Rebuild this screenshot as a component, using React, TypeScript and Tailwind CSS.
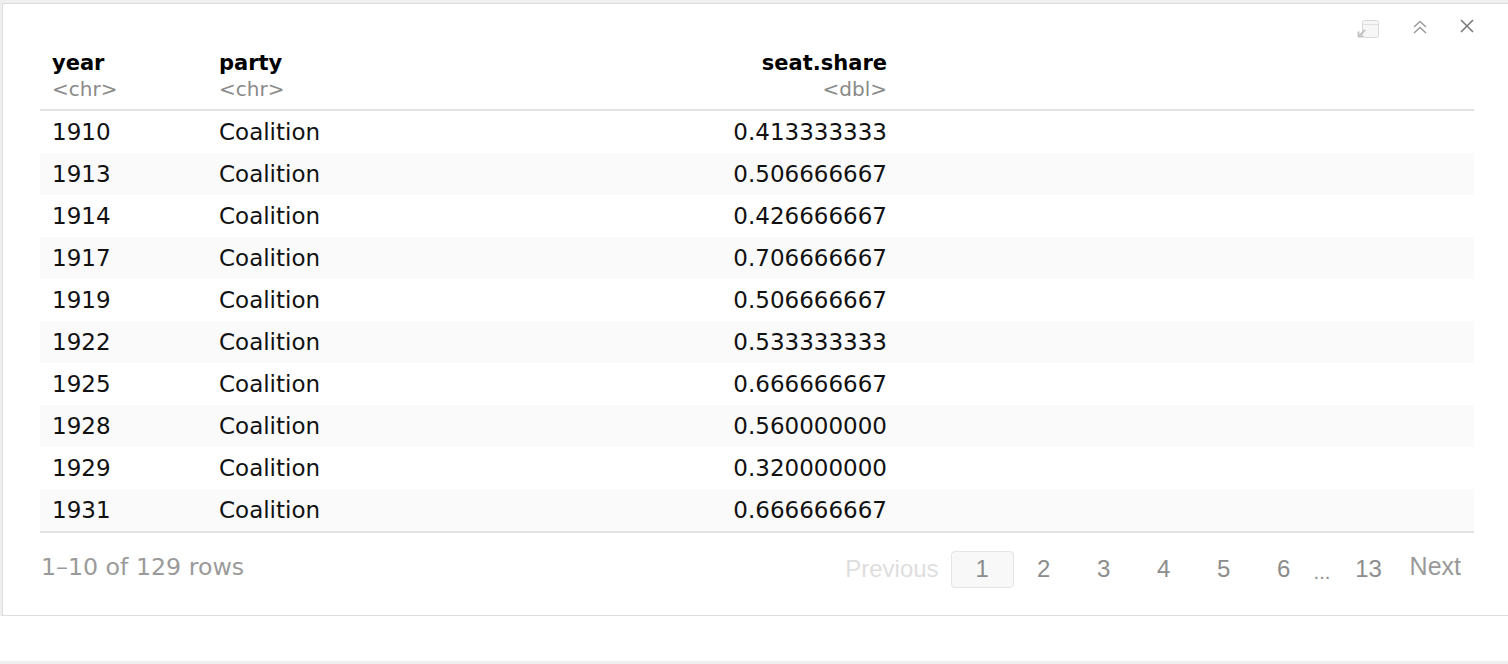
import React from "react";

const rows: [string, string, string][] = [
  ["1910", "Coalition", "0.413333333"],
  ["1913", "Coalition", "0.506666667"],
  ["1914", "Coalition", "0.426666667"],
  ["1917", "Coalition", "0.706666667"],
  ["1919", "Coalition", "0.506666667"],
  ["1922", "Coalition", "0.533333333"],
  ["1925", "Coalition", "0.666666667"],
  ["1928", "Coalition", "0.560000000"],
  ["1929", "Coalition", "0.320000000"],
  ["1931", "Coalition", "0.666666667"],
];

const pages = ["2", "3", "4", "5", "6"];

function PopoutIcon() {
  return (
    <svg width="24" height="20" viewBox="0 0 24 20" fill="none">
      <rect x="6.5" y="1.5" width="16" height="17" rx="2" fill="#f6f6f6" stroke="#d8d8d8" />
      <line x1="7" y1="5.5" x2="22" y2="5.5" stroke="#e0e0e0" />
      <path d="M9 11 L3 17" stroke="#c2c2c2" strokeWidth="1.8" />
      <path d="M2.5 12.5 V17.5 H7.5" stroke="#c2c2c2" strokeWidth="1.8" />
    </svg>
  );
}

function ChevronsUp() {
  return (
    <svg width="16" height="16" viewBox="0 0 16 16" fill="none" stroke="#9a9a9a" strokeWidth="1.5">
      <path d="M2 8 L8 2.5 L14 8" />
      <path d="M2 14 L8 8.5 L14 14" />
    </svg>
  );
}

function CloseIcon() {
  return (
    <svg width="14" height="14" viewBox="0 0 14 14" fill="none" stroke="#7a7a7a" strokeWidth="1.6">
      <path d="M1 1 L13 13 M13 1 L1 13" />
    </svg>
  );
}

export default function App() {
  return (
    <div className="w-[1508px] h-[664px] bg-[#efefef] flex flex-col overflow-hidden font-['DejaVu_Sans',sans-serif]">
      <div className="pl-[2px] pt-[3px]">
        <div className="h-[613px] bg-white border-l border-t border-b border-[#dcdcdc] flex flex-col pl-[37px] pr-[34px]">
          <div className="h-[46px] flex items-start justify-end gap-[32px] pt-[15px]">
            <PopoutIcon />
            <ChevronsUp />
            <CloseIcon />
          </div>

          <div className="grid grid-cols-[167px_220px_472px_1fr] border-b-2 border-[#e3e3e3] pb-[7px]">
            <div className="px-3">
              <div className="text-[21px] leading-[26px] font-bold text-black">year</div>
              <div className="text-[20px] leading-[26px] text-[#8a8a8a]">&lt;chr&gt;</div>
            </div>
            <div className="px-3">
              <div className="text-[21px] leading-[26px] font-bold text-black">party</div>
              <div className="text-[20px] leading-[26px] text-[#8a8a8a]">&lt;chr&gt;</div>
            </div>
            <div className="px-3 text-right">
              <div className="text-[21px] leading-[26px] font-bold text-black">seat.share</div>
              <div className="text-[20px] leading-[26px] text-[#8a8a8a]">&lt;dbl&gt;</div>
            </div>
            <div />
          </div>

          <div className="border-b-2 border-[#e3e3e3]">
            {rows.map(([year, party, share], i) => (
              <div
                key={year}
                className={`grid grid-cols-[167px_220px_472px_1fr] h-[42px] items-center text-[23px] text-[#111] ${
                  i % 2 === 1 ? "bg-[#fafafa]" : "bg-white"
                }`}
              >
                <div className="px-3">{year}</div>
                <div className="px-3">{party}</div>
                <div className="px-3 text-right">{share}</div>
                <div />
              </div>
            ))}
          </div>

          <div className="flex items-center justify-between h-[70px] pl-px pr-[13px]">
            <div className="text-[23.7px] text-[#9a9a9a]">1–10 of 129 rows</div>
            <div className="flex items-center font-['Liberation_Sans',sans-serif] text-[24px] text-[#8c8c8c] mt-[2px]">
              <span className="text-[#dedede] mr-[12px]">Previous</span>
              <span className="w-[63px] h-[37px] flex items-center justify-center rounded-[4px] border border-[#e4e4e4] bg-[#f8f8f8]">
                1
              </span>
              {pages.map((p) => (
                <span key={p} className="w-[60px] h-[37px] flex items-center justify-center">
                  {p}
                </span>
              ))}
              <span className="w-[32px] text-[20px] mt-[5px]">...</span>
              <span className="w-[46px] h-[37px] flex items-center justify-center">13</span>
              <span className="ml-[18px] text-[25px] text-[#999999] -mt-[4px]">Next</span>
            </div>
          </div>
        </div>
      </div>
      <div className="h-[45px] bg-white" />
      <div className="flex-1 bg-[#efefef]" />
    </div>
  );
}
